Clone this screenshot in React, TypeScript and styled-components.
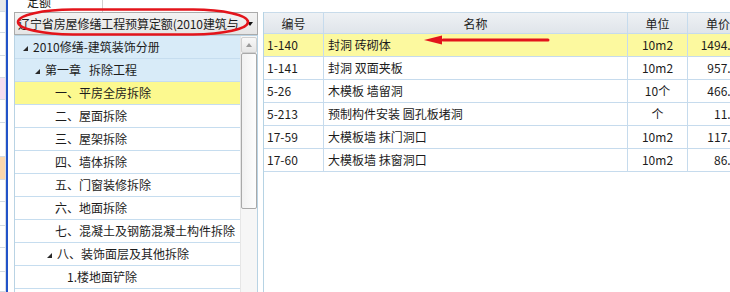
import React from "react";
import styled, { createGlobalStyle } from "styled-components";

const GlobalStyle = createGlobalStyle`
  html, body {
    margin: 0;
    padding: 0;
    background: #fff;
  }
  body {
    width: 730px;
    height: 292px;
    overflow: hidden;
    font-family: "Noto Sans CJK SC", "Noto Sans", sans-serif;
    font-size: 12px;
    color: #1c1c1c;
  }
`;

const Page = styled.div`
  display: flex;
  width: 730px;
  height: 292px;
  overflow: hidden;
`;

// thin strip of the neighbouring window on the far left
const SideStrip = styled.div`
  width: 5px;
  flex-shrink: 0;
  border-right: 1px solid #d9dde2;
  display: flex;
  flex-direction: column;
`;

const StripCell = styled.div<{ $h: number; $bg?: string }>`
  height: ${(p) => p.$h}px;
  flex-shrink: 0;
  box-sizing: border-box;
  background: ${(p) => p.$bg || "#fff"};
  border-bottom: 1px solid #d3dbe3;
`;

const BlueRule = styled.div`
  width: 2px;
  flex-shrink: 0;
  background: #2153c9;
  margin-right: 6px;
`;

const LeftPane = styled.div`
  position: relative;
  width: 244px;
  flex-shrink: 0;
  display: flex;
  flex-direction: column;
`;

const LabelRow = styled.div`
  height: 12px;
  display: flex;
  overflow: hidden;
`;

const LabelCell = styled.div`
  width: 89px;
  box-sizing: border-box;
  padding-left: 13px;
  border-right: 1px solid #d0d0d0;
  line-height: 16px;
  margin-top: -6px;
  height: 18px;
`;

const Combo = styled.div`
  height: 23px;
  box-sizing: border-box;
  border: 1px solid #ababab;
  background: linear-gradient(#f3f3f3, #e5e5e5);
  display: flex;
  align-items: center;
  padding: 0 4px 0 3px;
`;

const ComboText = styled.div`
  flex: 1;
  white-space: nowrap;
  overflow: hidden;
  line-height: 21px;
  letter-spacing: -0.1px;
`;

const ComboArrow = styled.span`
  width: 0;
  height: 0;
  border-style: solid;
  border-width: 4px 3.5px 0 3.5px;
  border-color: #111 transparent transparent transparent;
  margin-top: 1px;
`;

const TreePanel = styled.div`
  flex: 1;
  display: flex;
  border: 1px solid #b9d3e4;
  border-bottom: none;
  min-height: 0;
`;

const TreeRows = styled.div`
  flex: 1;
  overflow: hidden;
`;

const TreeRow = styled.div<{ $bg?: string }>`
  height: 23px;
  box-sizing: border-box;
  border-bottom: 1px solid #c6ddef;
  background: ${(p) => p.$bg || "#fff"};
  display: flex;
  align-items: center;
  white-space: pre;
  line-height: 22px;
`;

const Toggle = styled.span<{ $level: number; $leaf?: boolean }>`
  width: ${(p) => (p.$leaf ? 10 : 12)}px;
  margin-left: ${(p) => 6 + p.$level * 12}px;
  flex-shrink: 0;
  display: flex;
  padding-top: 2px;
`;

const Caret = styled.span`
  margin-left: 2px;
  width: 0;
  height: 0;
  border-style: solid;
  border-width: 0 0 5px 5px;
  border-color: transparent transparent #2a2a2a transparent;
`;

const Scrollbar = styled.div`
  width: 16px;
  flex-shrink: 0;
  padding-top: 1px;
  background: #f6f6f6;
  border-left: 1px solid #e6e6e6;
  display: flex;
  flex-direction: column;
`;

const ScrollButton = styled.div`
  height: 16px;
  box-sizing: border-box;
  border: 1px solid #cfcfcf;
  border-radius: 2px;
  background: linear-gradient(#f8f8f8, #e6e6e6);
  display: flex;
  align-items: center;
  justify-content: center;
`;

const UpChevron = styled.span`
  width: 0;
  height: 0;
  border-style: solid;
  border-width: 0 3.5px 4px 3.5px;
  border-color: transparent transparent #9a9a9a transparent;
`;

const Thumb = styled.div`
  height: 156px;
  box-sizing: border-box;
  border: 1px solid #a9a9a9;
  border-radius: 2px;
  background: linear-gradient(to right, #f1f1f1, #fdfdfd);
`;

const Annotation = styled.svg`
  position: absolute;
  overflow: visible;
  pointer-events: none;
`;

const GridPanel = styled.div`
  position: relative;
  flex: 1;
  margin-left: 5px;
  margin-top: 12px;
  border-left: 1px solid #b6d3e4;
  overflow: hidden;
`;

const GridRow = styled.div<{ $active?: boolean; $head?: boolean }>`
  display: grid;
  grid-template-columns: 60px 304px 60px 61px;
  height: ${(p) => (p.$head ? 22 : 23)}px;
  background: ${(p) =>
    p.$head
      ? "linear-gradient(#eef1f4, #dfe4ea)"
      : p.$active
      ? "#fcf99f"
      : "#fff"};
  border-top: ${(p) => (p.$head ? "1px solid #c8dbea" : "none")};
  box-sizing: border-box;
`;

const Cell = styled.div<{ $align?: "left" | "center" | "right"; $pad?: number }>`
  box-sizing: border-box;
  border-right: 1px solid #c6dbed;
  border-bottom: 1px solid #c6dbed;
  padding: 0 ${(p) => p.$pad ?? 4}px;
  text-align: ${(p) => p.$align || "left"};
  white-space: pre;
  overflow: hidden;
  line-height: 22px;
`;

const strip = [
  { h: 12, bg: "#e6e8ea" },
  { h: 21 },
  { h: 23 },
  { h: 22 },
  { h: 22, bg: "#f6def0" },
  { h: 23 },
  { h: 34 },
  { h: 23, bg: "#fbd7ad" },
  { h: 22 },
  { h: 24 },
  { h: 22 },
  { h: 24 },
  { h: 20 },
];

type Node = { level: number; text: string; open?: boolean; bg?: string };

const tree: Node[] = [
  { level: 0, text: "2010修缮-建筑装饰分册", open: true, bg: "#d8ebf8" },
  { level: 1, text: "第一章   拆除工程", open: true, bg: "#d8ebf8" },
  { level: 2, text: "一、平房全房拆除", bg: "#fcf98f" },
  { level: 2, text: "二、屋面拆除" },
  { level: 2, text: "三、屋架拆除" },
  { level: 2, text: "四、墙体拆除" },
  { level: 2, text: "五、门窗装修拆除" },
  { level: 2, text: "六、地面拆除" },
  { level: 2, text: "七、混凝土及钢筋混凝土构件拆除" },
  { level: 2, text: "八、装饰面层及其他拆除", open: true },
  { level: 3, text: "1.楼地面铲除" },
  { level: 3, text: "2.墙柱面铲除" },
];

const rows = [
  ["1-140", "封洞 砖砌体", "10m2", "1494.26"],
  ["1-141", "封洞 双面夹板", "10m2", "957.48"],
  ["5-26", "木模板 墙留洞", "10个", "466.05"],
  ["5-213", "预制构件安装 圆孔板堵洞", "个", "11.63"],
  ["17-59", "大模板墙 抹门洞口", "10m2", "117.52"],
  ["17-60", "大模板墙 抹窗洞口", "10m2", "86.37"],
];

export default function App() {
  return (
    <Page>
      <GlobalStyle />
      <SideStrip>
        {strip.map((s, i) => (
          <StripCell key={i} $h={s.h} $bg={s.bg} />
        ))}
      </SideStrip>
      <BlueRule />

      <LeftPane>
        <LabelRow>
          <LabelCell>定额</LabelCell>
        </LabelRow>
        <Combo>
          <ComboText>辽宁省房屋修缮工程预算定额(2010建筑与</ComboText>
          <ComboArrow />
        </Combo>
        <TreePanel>
          <TreeRows>
            {tree.map((n, i) => (
              <TreeRow key={i} $bg={n.bg}>
                <Toggle $level={n.level} $leaf={!n.open}>
                  {n.open && <Caret />}
                </Toggle>
                {n.text}
              </TreeRow>
            ))}
          </TreeRows>
          <Scrollbar>
            <ScrollButton>
              <UpChevron />
            </ScrollButton>
            <Thumb />
          </Scrollbar>
        </TreePanel>
        {/* red ring drawn over the combo */}
        <Annotation width="240" height="30" style={{ left: 2, top: 8 }}>
          <rect
            x="2"
            y="1.5"
            width="230"
            height="25"
            rx="55"
            ry="12.5"
            fill="none"
            stroke="#e3141b"
            strokeWidth="2.6"
          />
        </Annotation>
      </LeftPane>

      <GridPanel>
        <GridRow $head>
          <Cell $align="center">编号</Cell>
          <Cell $align="center">名称</Cell>
          <Cell $align="center">单位</Cell>
          <Cell $align="center">单价</Cell>
        </GridRow>
        {rows.map((r, i) => (
          <GridRow key={r[0]} $active={i === 0}>
            <Cell $pad={3}>{r[0]}</Cell>
            <Cell>{r[1]}</Cell>
            <Cell $align="center">{r[2]}</Cell>
            <Cell $align="right">{r[3]}</Cell>
          </GridRow>
        ))}
        {/* red arrow pointing at the selected row */}
        <Annotation width="135" height="14" style={{ left: 159, top: 21 }}>
          <line x1="20" y1="7" x2="125" y2="7" stroke="#e3141b" strokeWidth="3" strokeLinecap="round" />
          <polygon points="1,7 19,2.5 19,11.5" fill="#e3141b" />
        </Annotation>
      </GridPanel>
    </Page>
  );
}
